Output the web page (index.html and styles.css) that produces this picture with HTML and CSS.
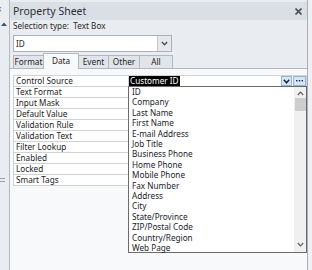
FILE: index.html
```html
<!DOCTYPE html>
<html>
<head>
<meta charset="utf-8">
<link rel="stylesheet" href="styles.css">
</head>
<body>
<div class="app">
  <div class="side">
    <span class="side-x">×</span>
    <svg class="side-up" width="6" height="4" viewBox="0 0 6 4"><polygon points="0,4 3,0.5 6,4" fill="#44536a"/></svg>
    <span class="grip"></span>
  </div>
  <div class="panel">
    <div class="head">
      <span class="title">Property Sheet</span>
      <svg class="close" width="7" height="7" viewBox="0 0 7 7"><path d="M0.5 0.5 L6.5 6.5 M6.5 0.5 L0.5 6.5" stroke="#4a4f57" stroke-width="1.6"/></svg>
    </div>
    <div class="sel">Selection type:&nbsp; Text Box</div>
    <div class="combo">
      <span class="combo-text">ID</span>
      <span class="combo-btn"><svg width="7" height="5" viewBox="0 0 7 5"><polyline points="0.8,1 3.5,3.8 6.2,1" fill="none" stroke="#4a4a4a" stroke-width="1.3"/></svg></span>
    </div>
    <div class="tabs">
      <div class="tab t-format">Format</div>
      <div class="tab t-data active">Data</div>
      <div class="tab t-event">Event</div>
      <div class="tab t-other">Other</div>
      <div class="tab t-all">All</div>
    </div>
    <div class="pane">
      <div class="grid">
        <div class="lbl">Control Source</div>
        <div class="val first">
          <span class="hl">Customer ID</span>
          <span class="vbtn vb-dd"><svg width="7" height="5" viewBox="0 0 7 5"><polyline points="0.8,0.8 3.5,3.8 6.2,0.8" fill="none" stroke="#1d2a3c" stroke-width="1.6"/></svg></span>
          <span class="vbtn vb-el"><svg width="7" height="2" viewBox="0 0 7 2"><rect x="0" y="0" width="1.4" height="1.4" fill="#1d2a3c"/><rect x="2.8" y="0" width="1.4" height="1.4" fill="#1d2a3c"/><rect x="5.6" y="0" width="1.4" height="1.4" fill="#1d2a3c"/></svg></span>
        </div>
        <div class="lbl">Text Format</div><div class="val"></div>
        <div class="lbl">Input Mask</div><div class="val"></div>
        <div class="lbl">Default Value</div><div class="val"></div>
        <div class="lbl">Validation Rule</div><div class="val"></div>
        <div class="lbl">Validation Text</div><div class="val"></div>
        <div class="lbl">Filter Lookup</div><div class="val"></div>
        <div class="lbl">Enabled</div><div class="val"></div>
        <div class="lbl">Locked</div><div class="val"></div>
        <div class="lbl">Smart Tags</div><div class="val"></div>

        <div class="list">
          <ul class="items">
            <li>ID</li>
            <li>Company</li>
            <li>Last Name</li>
            <li>First Name</li>
            <li>E-mail Address</li>
            <li>Job Title</li>
            <li>Business Phone</li>
            <li>Home Phone</li>
            <li>Mobile Phone</li>
            <li>Fax Number</li>
            <li>Address</li>
            <li>City</li>
            <li>State/Province</li>
            <li>ZIP/Postal Code</li>
            <li>Country/Region</li>
            <li>Web Page</li>
          </ul>
          <div class="sbar">
            <svg class="sb-up" width="7" height="5" viewBox="0 0 7 5"><polyline points="0.8,4 3.5,1.2 6.2,4" fill="none" stroke="#606060" stroke-width="1.2"/></svg>
            <div class="thumb"></div>
            <svg class="sb-down" width="7" height="5" viewBox="0 0 7 5"><polyline points="0.8,1 3.5,3.8 6.2,1" fill="none" stroke="#606060" stroke-width="1.2"/></svg>
          </div>
        </div>
      </div>
    </div>
  </div>
  <div class="rstrip"></div>
</div>
</body>
</html>
```

FILE: styles.css
```css
* { box-sizing: border-box; }
body {
  margin: 0;
  width: 312px;
  height: 270px;
  overflow: hidden;
  background: #e9ecf0;
  font-family: "Noto Sans", "Open Sans", sans-serif;
  font-size: 8.2px;
  color: #1e1e1e;
}
.app { display: flex; height: 270px; }

.side {
  width: 10px;
  border-right: 1px solid #b4b9c1;
  display: flex;
  flex-direction: column;
  background: #e9ecf0;
  overflow: hidden;
}
.side-x {
  font-size: 10px;
  line-height: 10px;
  color: #555;
  margin: 4px 0 0 -4px;
}
.side-up { margin: 8px 0 0 1px; display: block; }
.grip {
  width: 5px;
  height: 4px;
  margin-top: 152px;
  border-top: 1px solid #9aa0a8;
  border-bottom: 1px solid #9aa0a8;
}

.panel {
  width: 298px;
  border-right: 1px solid #a9aeb6;
  display: flex;
  flex-direction: column;
}
.rstrip { width: 4px; background: #eef0f3; }

.head {
  margin-top: 2px;
  height: 18px;
  background: #dadfe6;
  display: flex;
  align-items: center;
  justify-content: space-between;
  padding: 0 5px 0 3px;
}
.title { font-size: 10.5px; color: #2b2f36; }
.close { display: block; }

.sel {
  height: 13px;
  line-height: 12px;
  padding-left: 3px;
  color: #2a2a2a;
}

.combo {
  margin: 2px 0 0 3px;
  width: 159px;
  height: 17px;
  background: #fff;
  border: 1px solid #abb0b8;
  display: flex;
  align-items: center;
  justify-content: space-between;
  padding: 0 0 0 2px;
}
.combo-btn {
  width: 14px;
  height: 15px;
  background: #e6e8eb;
  border-left: 1px solid #c4c8ce;
  display: flex;
  align-items: center;
  justify-content: center;
}

.tabs {
  margin-top: 3px;
  height: 13px;
  display: flex;
  align-items: flex-end;
  padding-left: 3px;
  position: relative;
  z-index: 1;
}
.tab {
  height: 13px;
  border: 1px solid #b3b8c0;
  border-bottom: none;
  background: #e1e5ea;
  display: flex;
  align-items: center;
  justify-content: center;
  line-height: 10px;
  margin-right: -1px;
}
.t-format { width: 31px; }
.t-data { width: 36px; }
.t-event { width: 31px; }
.t-other { width: 32px; }
.t-all { width: 34px; }
.tab.active {
  height: 16px;
  margin-bottom: -1px;
  background: #f8f9fa;
  padding-bottom: 2px;
}

.pane {
  flex: 1;
  background: #f8f9fa;
  border-top: 1px solid #b3b8c0;
  padding: 6px 0 0 3px;
}

.grid {
  position: relative;
  width: 294px;
  display: grid;
  grid-template-columns: 115px 1fr;
  grid-auto-rows: 11px;
  border-top: 1px solid #cfd3d8;
  border-left: 1px solid #cfd3d8;
  background: #fff;
}
.lbl, .val {
  border-right: 1px solid #cfd3d8;
  border-bottom: 1px solid #cfd3d8;
  line-height: 10px;
  white-space: nowrap;
}
.lbl { padding-left: 2px; color: #222; }
.val.first { display: flex; align-items: stretch; }
.hl {
  background: #000;
  color: #fff;
  padding: 0 1px;
  line-height: 10px;
}
.vbtn {
  height: 10px;
  background: #d7e6f5;
  border: 1px solid #94b4d6;
  display: flex;
  align-items: center;
  justify-content: center;
}
.vb-dd { width: 11px; margin-left: auto; }
.vb-el { width: 13px; margin-left: 1px; }

.list {
  position: absolute;
  left: 114px;
  top: 10px;
  width: 179px;
  height: 167px;
  background: #fff;
  border: 1px solid #6b6b6b;
  display: flex;
  z-index: 2;
}
.items {
  flex: 1;
  list-style: none;
  margin: 0;
  padding: 0 0 0 3px;
  line-height: 10.4px;
  color: #1a1a2a;
}
.sbar {
  width: 12px;
  background: #f0f0f0;
  display: flex;
  flex-direction: column;
  align-items: center;
  margin-right: 0;
}
.sb-up { display: block; margin-top: 4px; }
.thumb {
  width: 11px;
  height: 13px;
  margin-top: 2px;
  background: #cdcdcd;
}
.sb-down { display: block; margin-top: auto; margin-bottom: 5px; }
```
